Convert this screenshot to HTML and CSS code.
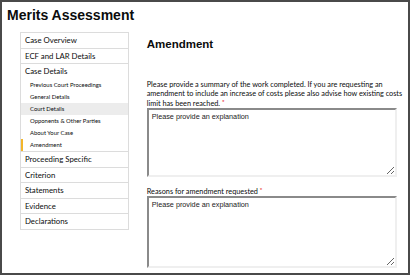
FILE: index.html
```html
<!DOCTYPE html>
<html lang="en">
  <head>
    <meta charset="UTF-8" />
    <meta name="viewport" content="width=device-width, initial-scale=1.0" />
    <title>Merits Assessment</title>
    <link rel="stylesheet" href="styles.css">
  </head>
  <body>
    <div class="frame">
      <h1 class="page-title">Merits Assessment</h1>
      <div class="layout">
        <ul class="side-nav">
          <li class="nav-item">Case Overview</li>
          <li class="nav-item">ECF and LAR Details</li>
          <li class="nav-group">
            <div class="nav-group-title">Case Details</div>
            <ul class="sub-nav">
              <li>Previous Court Proceedings</li>
              <li>General Details</li>
              <li class="hover">Court Details</li>
              <li>Opponents &amp; Other Parties</li>
              <li>About Your Case</li>
              <li class="current">Amendment</li>
            </ul>
          </li>
          <li class="nav-item">Proceeding Specific</li>
          <li class="nav-item">Criterion</li>
          <li class="nav-item">Statements</li>
          <li class="nav-item">Evidence</li>
          <li class="nav-item">Declarations</li>
        </ul>
        <div class="content">
          <h2>Amendment</h2>
          <label class="field-label" for="summary">Please provide a summary of the work completed. If you are requesting an amendment to include an increase of costs please also advise how existing costs limit has been reached. <span class="req">*</span></label>
          <textarea id="summary" class="field">Please provide an explanation</textarea>
          <label class="field-label second" for="reasons">Reasons for amendment requested <span class="req">*</span></label>
          <textarea id="reasons" class="field tall">Please provide an explanation</textarea>
        </div>
      </div>
    </div>
  </body>
</html>
```

FILE: styles.css
```css
body {
  margin: 0;
  padding: 0;
  background: #fff;
  font-family: "Lato", "Liberation Sans", sans-serif;
  color: #0b0c0c;
}
.frame {
  width: 410px;
  height: 275px;
  box-sizing: border-box;
  border: 2px solid #4a4a4a;
  overflow: hidden;
}
.page-title {
  font-family: "Liberation Sans", Arial, sans-serif;
  font-size: 14px;
  font-weight: bold;
  margin: 0;
  padding: 4px 0 0 5px;
  line-height: 18px;
}
.layout {
  display: flex;
  align-items: flex-start;
  padding: 8px 0 0 18px;
}
.side-nav {
  list-style: none;
  margin: 0;
  padding: 0;
  width: 107px;
  border: 1px solid #dcdcdc;
  border-bottom: none;
  font-size: 7.8px;
}
.nav-item,
.nav-group-title {
  padding: 0 0 0 4px;
  height: 14.5px;
  line-height: 14.5px;
}
.nav-item,
.nav-group {
  border-bottom: 1px solid #dcdcdc;
}
.sub-nav {
  list-style: none;
  margin: 0;
  padding: 0;
  font-size: 5.9px;
}
.sub-nav li {
  padding-left: 7px;
  height: 12.1px;
  line-height: 12.1px;
  border-left: 2px solid transparent;
}
.sub-nav li.hover {
  background: #ececec;
}
.sub-nav li.current {
  border-left-color: #f3b62b;
}
.content {
  margin-left: 18px;
  width: 262px;
}
.content h2 {
  font-family: "Liberation Sans", Arial, sans-serif;
  font-size: 11.5px;
  font-weight: bold;
  margin: 5px 0 0;
  line-height: 14px;
}
.field-label {
  display: block;
  font-size: 7.3px;
  line-height: 9.3px;
  margin-top: 29px;
}
.field-label.second {
  margin-top: 10px;
}
.req {
  color: #e8141b;
  font-weight: bold;
  vertical-align: 2px;
  font-size: 6px;
  line-height: 0;
}
.field {
  display: block;
  width: 250px;
  height: 69px;
  box-sizing: border-box;
  margin: 0;
  padding: 2px 3px;
  border: 2px solid;
  border-color: #8a8a8a #efefef #efefef #8a8a8a;
  font-family: "Liberation Sans", Arial, sans-serif;
  font-size: 7.25px;
  color: #222;
  resize: vertical;
}
.field.tall {
  height: 72px;
}
```
